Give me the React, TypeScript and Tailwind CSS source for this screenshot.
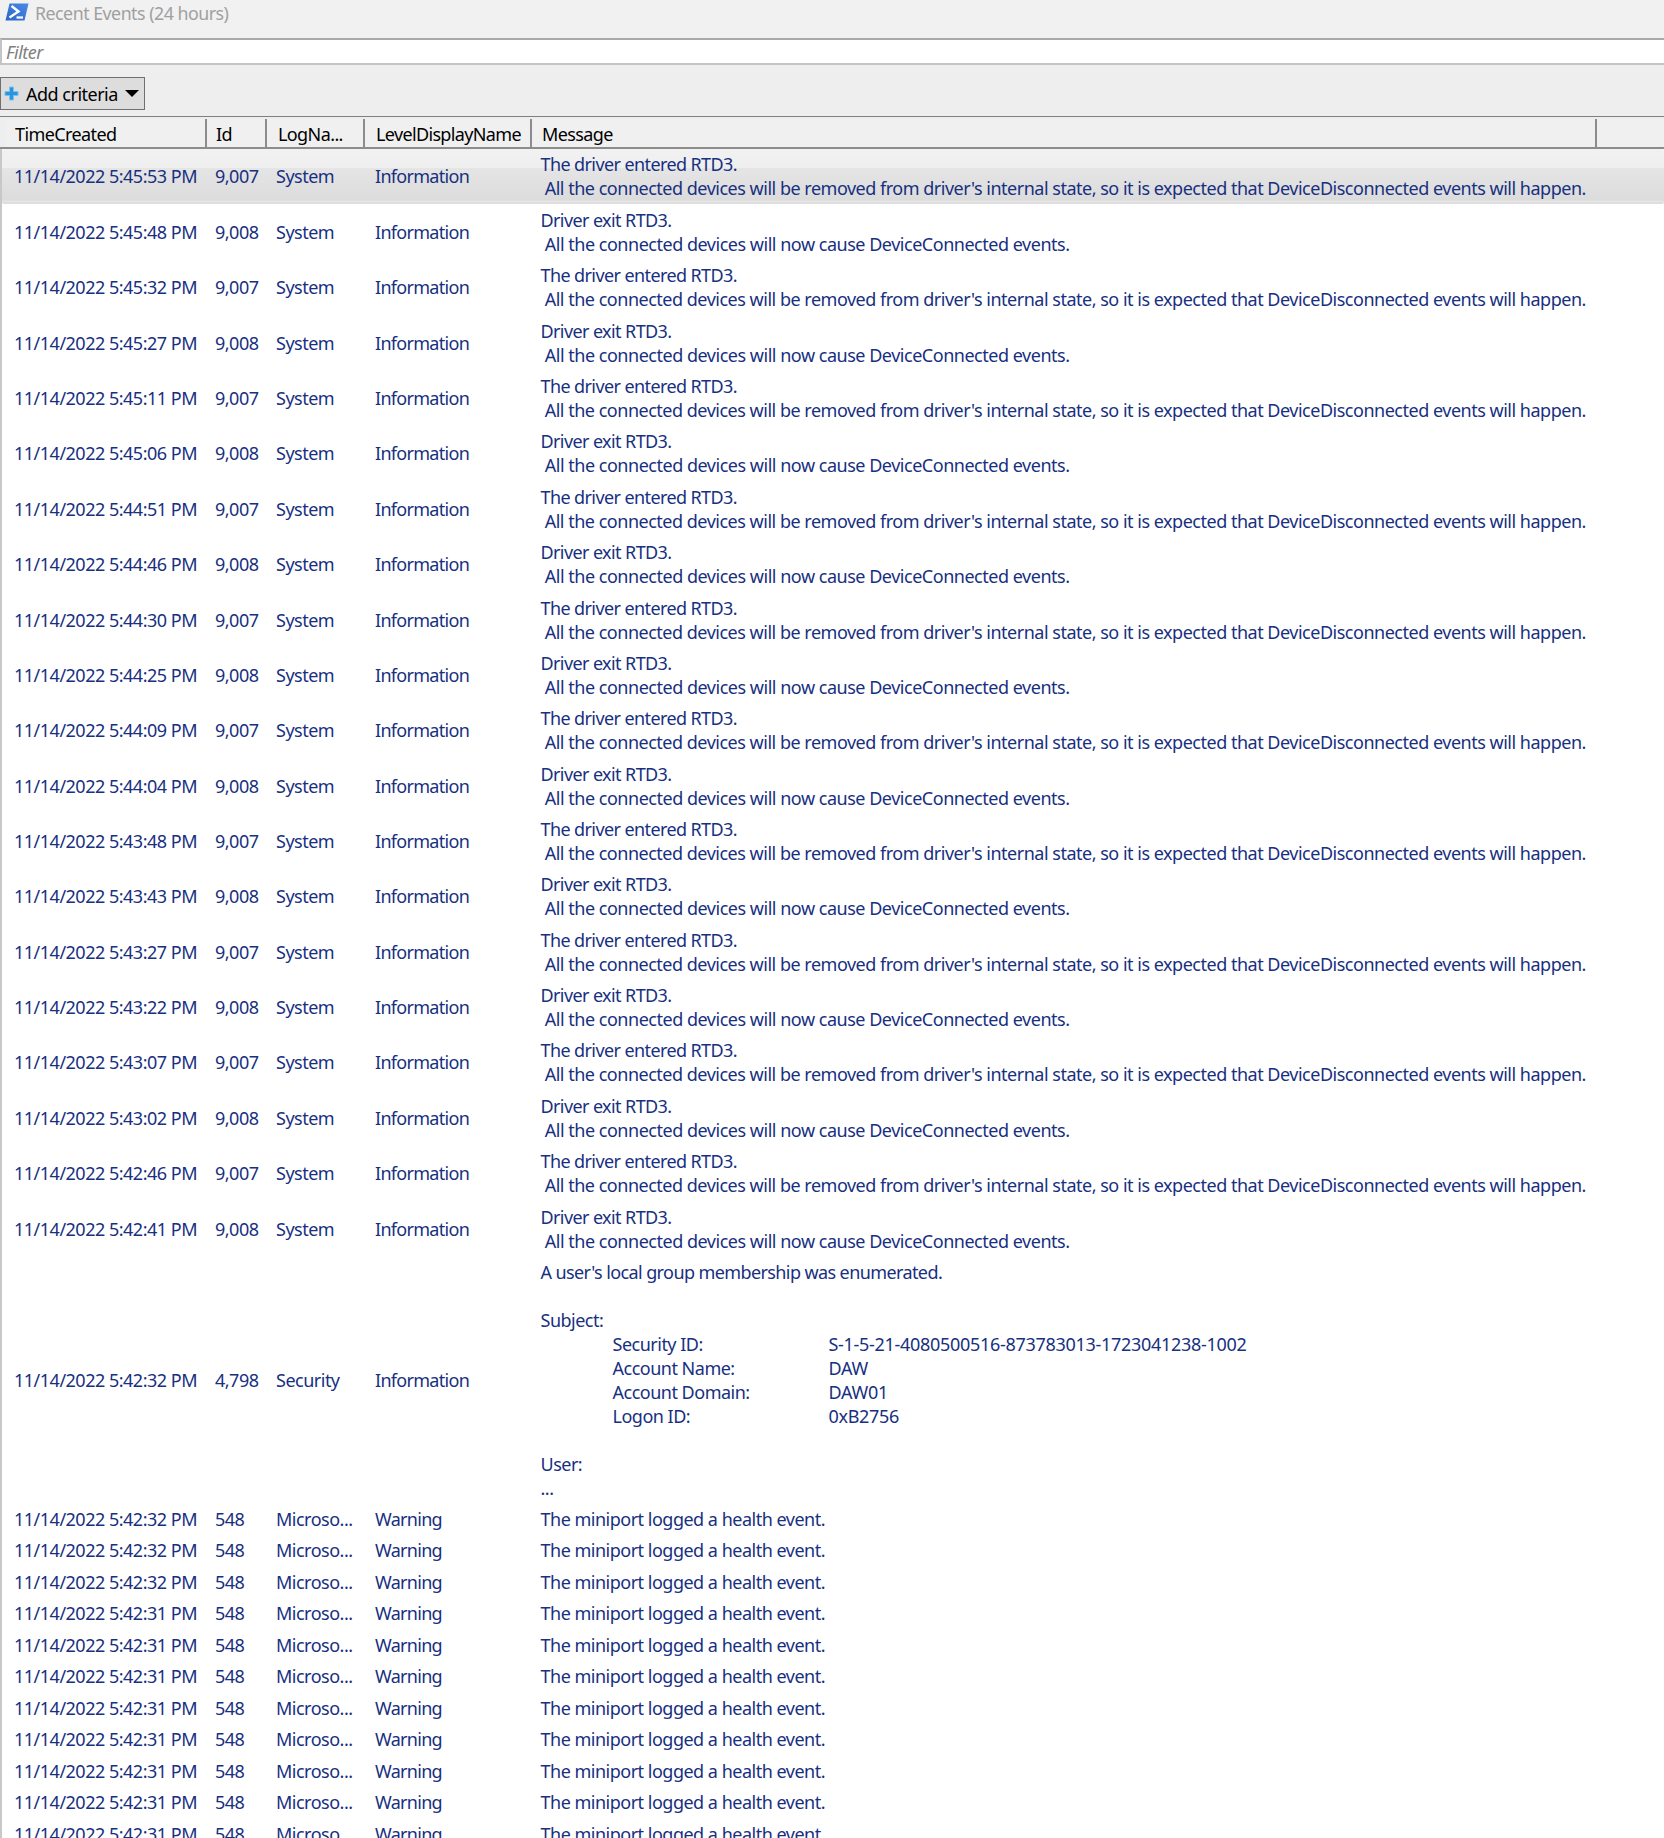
const font = "font-['Noto_Sans','Open_Sans',sans-serif]";

const times = [
  "5:45:53", "5:45:48", "5:45:32", "5:45:27", "5:45:11", "5:45:06", "5:44:51", "5:44:46", "5:44:30", "5:44:25",
  "5:44:09", "5:44:04", "5:43:48", "5:43:43", "5:43:27", "5:43:22", "5:43:07", "5:43:02", "5:42:46", "5:42:41",
];
const warnTimes = ["5:42:32", "5:42:32", "5:42:32", "5:42:31", "5:42:31", "5:42:31", "5:42:31", "5:42:31", "5:42:31", "5:42:31", "5:42:31"];

function Cells({ t, id, log, lvl }: { t: string; id: string; log: string; lvl: string }) {
  return (
    <>
      <div className="w-[213px] pl-[12px] shrink-0 whitespace-nowrap">11/14/2022 {t} PM</div>
      <div className="w-[61px] shrink-0">{id}</div>
      <div className="w-[99px] shrink-0">{log}</div>
      <div className="w-[165.5px] shrink-0 tracking-[-0.7px]">{lvl}</div>
    </>
  );
}

function Msg({ even }: { even: boolean }) {
  return even ? (
    <div className="whitespace-pre">
      <div className="tracking-[-0.6px]">The driver entered RTD3.</div>
      <div className="tracking-[-0.49px]"> All the connected devices will be removed from driver's internal state, so it is expected that DeviceDisconnected events will happen.</div>
    </div>
  ) : (
    <div className="whitespace-pre">
      <div className="tracking-[-0.6px]">Driver exit RTD3.</div>
      <div className="tracking-[-0.48px]"> All the connected devices will now cause DeviceConnected events.</div>
    </div>
  );
}

export default function App() {
  return (
    <div className={`w-[1664px] h-[1838px] overflow-hidden bg-white ${font} text-[18px] leading-[24px] tracking-[-0.5px] text-[#17307f]`}>
      <div className="h-[38px] bg-[#f1f1f1] flex items-start pt-[3px] pl-[5px] gap-[6px]">
        <svg width="24" height="18" viewBox="0 0 24 18">
          <defs>
            <linearGradient id="ps" x1="0" y1="1" x2="1" y2="0">
              <stop offset="0" stopColor="#2a66c8" />
              <stop offset="1" stopColor="#4a8be6" />
            </linearGradient>
          </defs>
          <path d="M4.5 0.5H23.5L19.5 17.5H0.5Z" fill="url(#ps)" />
          <path d="M6.5 3L13.5 8.5L4.5 14.5" fill="none" stroke="#fff" strokeWidth="2.4" />
          <path d="M11.5 14.5H18" stroke="#fff" strokeWidth="2.2" />
        </svg>
        <span className="text-[#a0a0a0] leading-[20px] text-[17.8px]">Recent Events (24 hours)</span>
      </div>
      <div className="h-[27px] bg-white border-t-2 border-l-2 border-b-2 border-t-[#a9a9ad] border-l-[#c4c4c4] border-b-[#c4c4c4] pl-[4px] italic text-[#808080] leading-[24px]">
        Filter
      </div>
      <div className="h-[52px] bg-[#eeeeee] border-b border-[#808080] pt-[12px]">
        <div className="w-[145px] h-[33px] bg-[#dddddd] border border-[#707070] flex items-center pl-[3px] text-[#000] whitespace-nowrap">
          <svg width="15" height="15" viewBox="0 0 15 15" className="mr-[7px] shrink-0">
            <path d="M5.5 1H9.5V5.5H14V9.5H9.5V14H5.5V9.5H1V5.5H5.5Z" fill="#2b94dc" stroke="#7cc0ee" strokeWidth="1" strokeLinejoin="round" />
          </svg>
          <span>Add criteria</span>
          <span className="ml-[7px] w-0 h-0 border-l-[7px] border-r-[7px] border-t-[7px] border-l-transparent border-r-transparent border-t-black" />
        </div>
      </div>
      <div className="h-[32px] flex bg-[#eeeeee] border-b-2 border-[#8c8c8c] pl-[6px] pt-[2px] text-[#000]">
        <div className="w-[201px] pl-[9px] pt-[3px] bg-[#f0f0f0] border-r-2 border-[#8c8c8c] shrink-0 tracking-[-0.6px]">TimeCreated</div>
        <div className="w-[60px] pl-[9px] pt-[3px] bg-[#f0f0f0] border-r-2 border-[#8c8c8c] shrink-0">Id</div>
        <div className="w-[98px] pl-[11px] pt-[3px] bg-[#f0f0f0] border-r-2 border-[#8c8c8c] shrink-0 tracking-[-0.6px]">LogNa...</div>
        <div className="w-[167px] pl-[11px] pt-[3px] bg-[#f0f0f0] border-r-2 border-[#8c8c8c] shrink-0 tracking-[-0.65px]">LevelDisplayName</div>
        <div className="w-[1065px] pl-[10px] pt-[3px] bg-[#f0f0f0] border-r-2 border-[#8c8c8c] shrink-0 tracking-[-0.6px]">Message</div>
        <div className="grow bg-[#f0f0f0]" />
      </div>
      <div className="border-l-2 border-[#c8c8c8]">
        {times.map((t, i) => (
          <div
            key={t}
            className={`h-[55.37px] flex items-center ${
              i === 0
                ? "bg-[linear-gradient(#f1f1f1_0%,#efefef_36%,#e5e5e5_36%,#dcdcdc_96%,#e8e8e8_100%)] rounded-[2px] border-b-2 border-[#dedede]"
                : ""
            }`}
          >
            <Cells t={t} id={i % 2 ? "9,008" : "9,007"} log="System" lvl="Information" />
            <Msg even={i % 2 === 0} />
          </div>
        ))}
        <div className="h-[247px] flex items-center">
          <Cells t="5:42:32" id="4,798" log="Security" lvl="Information" />
          <div className="whitespace-pre">
            <div className="tracking-[-0.6px]">A user's local group membership was enumerated.</div>
            <div className="h-[24px]" />
            <div>Subject:</div>
            {[
              ["Security ID:", "S-1-5-21-4080500516-873783013-1723041238-1002"],
              ["Account Name:", "DAW"],
              ["Account Domain:", "DAW01"],
              ["Logon ID:", "0xB2756"],
            ].map(([a, b]) => (
              <div key={a} className="flex pl-[72px]">
                <span className="w-[216px]">{a}</span>
                <span className="tracking-[-0.3px]">{b}</span>
              </div>
            ))}
            <div className="h-[24px]" />
            <div>User:</div>
            <div>...</div>
          </div>
        </div>
        {warnTimes.map((t, i) => (
          <div key={i} className="h-[31.5px] flex items-center">
            <Cells t={t} id="548" log="Microso..." lvl="Warning" />
            <div>The miniport logged a health event.</div>
          </div>
        ))}
      </div>
    </div>
  );
}
